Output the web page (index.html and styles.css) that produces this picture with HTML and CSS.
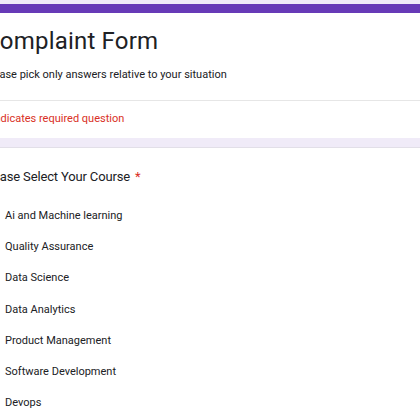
FILE: index.html
```html
<!DOCTYPE html>
<html>
<head>
<meta charset="utf-8">
<link rel="stylesheet" href="styles.css">
</head>
<body>
<div class="page">
  <div class="topbar"></div>
  <div class="card header">
    <h1 class="title">Complaint Form</h1>
    <p class="desc">Please pick only answers relative to your situation</p>
  </div>
  <div class="card required">
    <span>* Indicates required question</span>
  </div>
  <div class="gap"></div>
  <div class="card question">
    <div class="qtitle">Please Select Your Course <span class="star">*</span></div>
    <ul class="options">
      <li><span class="radio"></span>Ai and Machine learning</li>
      <li><span class="radio"></span>Quality Assurance</li>
      <li><span class="radio"></span>Data Science</li>
      <li><span class="radio"></span>Data Analytics</li>
      <li><span class="radio"></span>Product Management</li>
      <li><span class="radio"></span>Software Development</li>
      <li><span class="radio"></span>Devops</li>
    </ul>
  </div>
</div>
</body>
</html>
```
FILE: styles.css
```css
html, body {
  margin: 0;
  padding: 0;
  background: #f0ebf8;
  font-family: Roboto, "Liberation Sans", sans-serif;
  color: #202124;
  overflow: hidden;
}
.page {
  margin-left: -40px;
  width: 520px;
  padding-top: 4px;
}
.topbar {
  height: 9px;
  background: #673ab7;
}
.card {
  background: #fff;
}
.header {
  padding: 12px 0 17px 24px;
  border-bottom: 1px solid #e6e6e6;
}
.title {
  margin: 0;
  font-size: 24px;
  font-weight: 400;
  line-height: 32px;
  letter-spacing: 0.2px;
}
.desc {
  margin: 10px 0 0;
  font-size: 11px;
  line-height: 16px;
}
.required {
  padding: 10px 0 11px 24px;
  font-size: 11px;
  line-height: 16px;
  color: #d93025;
}
.gap {
  height: 9px;
  border-bottom: 1px solid #e2dfe8;
}
.question {
  padding: 19px 0 0 24px;
  height: 300px;
}
.qtitle {
  font-size: 13px;
  line-height: 20px;
  margin-left: -2px;
  letter-spacing: -0.15px;
}
.star {
  color: #d93025;
  margin-left: 2px;
}
.options {
  list-style: none;
  margin: 13px 0 0 -4px;
  padding: 0;
}
.options li {
  display: flex;
  align-items: center;
  height: 31.2px;
  font-size: 11px;
}
.radio {
  width: 14px;
  height: 14px;
  border: 2px solid #5f6368;
  border-radius: 50%;
  margin-right: 7px;
  flex: none;
}
```
